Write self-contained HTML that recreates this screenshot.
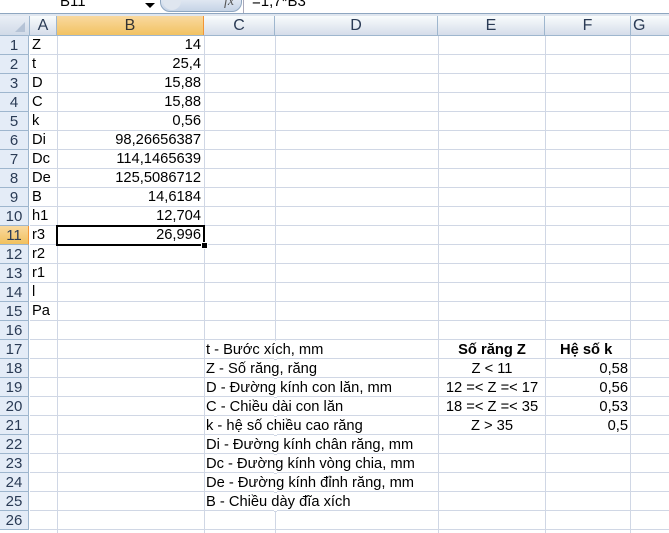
<!DOCTYPE html>
<html><head><meta charset="utf-8"><style>
body{margin:0;width:669px;height:533px;overflow:hidden;background:#fff;font-family:"Liberation Sans",Arial,sans-serif;font-size:14.7px;color:#000;position:relative}
.a{position:absolute}
.t{position:absolute;height:19px;line-height:19px;white-space:nowrap}
.r{text-align:right}
.c{text-align:center}
.vl{position:absolute;width:1px;background:#d0d7e5;top:36px;height:497px}
.ch{position:absolute;top:16px;height:20px;line-height:20px;text-align:center;font-size:16px;color:#2a3b55;background:linear-gradient(#f9fcfd,#d3dbe9);border-right:1px solid #9eb6ce;box-sizing:border-box}
.rh{position:absolute;left:0;width:29px;height:19px;line-height:19px;text-align:center;font-size:15px;color:#2a3b55;background:#e4ecf7;border-bottom:1px solid #9eb6ce;border-right:1px solid #9eb6ce;box-sizing:border-box}
</style></head><body>
<div class="a" style="left:0;top:0;width:669px;height:13px;background:#fff;border-bottom:1px solid #8ea6c0"></div>
<div class="t" style="left:60px;top:-8px;font-size:15px">B11</div>
<div class="a" style="left:145px;top:3px;width:0;height:0;border-left:5px solid transparent;border-right:5px solid transparent;border-top:5px solid #000"></div>
<div class="a" style="left:160px;top:-8px;width:82px;height:20px;border-radius:0 0 10px 10px;background:linear-gradient(#f0f4f9,#c5d3e6);border:1px solid #8ea6c0;box-sizing:border-box"></div>
<div class="a" style="left:163px;top:-8px;width:18px;height:18px;border-radius:9px;background:#dfe6ef"></div>
<div class="t" style="left:224px;top:-8px;font-style:italic;font-family:'Liberation Serif',serif;color:#555;font-size:14px">fx</div>
<div class="a" style="left:243px;top:0;width:1px;height:13px;background:#aab"></div>
<div class="t" style="left:252px;top:-8px;font-size:15px">=1,7*B3</div>
<div class="a" style="left:0;top:14px;width:669px;height:2px;background:#dfe6ef"></div>
<div class="ch" style="left:0;width:30px;background:linear-gradient(#eaeff6,#cfd9e7)"></div>
<div class="a" style="left:15px;top:22px;width:0;height:0;border-left:10px solid transparent;border-bottom:10px solid #b5c3d6"></div>
<div class="ch" style="left:30px;width:27px">A</div>
<div class="ch" style="left:57px;width:147px;background:linear-gradient(#f9d99f,#f1c15f);border-right:1px solid #f29536;color:#333">B</div>
<div class="ch" style="left:204px;width:71px">C</div>
<div class="ch" style="left:275px;width:163px">D</div>
<div class="ch" style="left:438px;width:107px">E</div>
<div class="ch" style="left:545px;width:86px">F</div>
<div class="ch" style="left:631px;width:40px;text-align:left;padding-left:2px">G</div>
<div class="a" style="left:0;top:35px;width:669px;height:1px;background:#9eb6ce"></div>
<div class="vl" style="left:57px"></div><div class="vl" style="left:204px"></div><div class="vl" style="left:275px"></div><div class="vl" style="left:438px"></div><div class="vl" style="left:545px"></div><div class="vl" style="left:630px"></div>
<div class="a" style="left:30px;top:36px;width:639px;height:497px;background:repeating-linear-gradient(to bottom,transparent 0,transparent 18px,#d0d7e5 18px,#d0d7e5 19px)"></div>
<div class="a" style="left:274px;top:341px;width:3px;height:171px;background:repeating-linear-gradient(to bottom,#fff 0,#fff 18px,#d0d7e5 18px,#d0d7e5 19px)"></div>
<div class="rh" style="top:36px">1</div><div class="rh" style="top:55px">2</div><div class="rh" style="top:74px">3</div><div class="rh" style="top:93px">4</div><div class="rh" style="top:112px">5</div><div class="rh" style="top:131px">6</div><div class="rh" style="top:150px">7</div><div class="rh" style="top:169px">8</div><div class="rh" style="top:188px">9</div><div class="rh" style="top:207px">10</div>
<div class="rh" style="top:226px;background:linear-gradient(#f9d99f,#f1c15f);border-right:1px solid #f29536">11</div>
<div class="rh" style="top:245px">12</div><div class="rh" style="top:264px">13</div><div class="rh" style="top:283px">14</div><div class="rh" style="top:302px">15</div><div class="rh" style="top:321px">16</div><div class="rh" style="top:340px">17</div><div class="rh" style="top:359px">18</div><div class="rh" style="top:378px">19</div><div class="rh" style="top:397px">20</div><div class="rh" style="top:416px">21</div><div class="rh" style="top:435px">22</div><div class="rh" style="top:454px">23</div><div class="rh" style="top:473px">24</div><div class="rh" style="top:492px">25</div><div class="rh" style="top:511px">26</div>
<div class="t" style="left:32px;top:36px">Z</div><div class="t" style="left:32px;top:55px">t</div><div class="t" style="left:32px;top:74px">D</div><div class="t" style="left:32px;top:93px">C</div><div class="t" style="left:32px;top:112px">k</div><div class="t" style="left:32px;top:131px">Di</div><div class="t" style="left:32px;top:150px">Dc</div><div class="t" style="left:32px;top:169px">De</div><div class="t" style="left:32px;top:188px">B</div><div class="t" style="left:32px;top:207px">h1</div><div class="t" style="left:32px;top:226px">r3</div><div class="t" style="left:32px;top:245px">r2</div><div class="t" style="left:32px;top:264px">r1</div><div class="t" style="left:32px;top:283px">l</div><div class="t" style="left:32px;top:302px">Pa</div>
<div class="t r" style="left:58px;width:143px;top:36px">14</div><div class="t r" style="left:58px;width:143px;top:55px">25,4</div><div class="t r" style="left:58px;width:143px;top:74px">15,88</div><div class="t r" style="left:58px;width:143px;top:93px">15,88</div><div class="t r" style="left:58px;width:143px;top:112px">0,56</div><div class="t r" style="left:58px;width:143px;top:131px">98,26656387</div><div class="t r" style="left:58px;width:143px;top:150px">114,1465639</div><div class="t r" style="left:58px;width:143px;top:169px">125,5086712</div><div class="t r" style="left:58px;width:143px;top:188px">14,6184</div><div class="t r" style="left:58px;width:143px;top:207px">12,704</div>
<div class="a" style="left:56px;top:225px;width:149px;height:21px;border:2px solid #000;box-sizing:border-box"></div>
<div class="a" style="left:201px;top:242px;width:5px;height:5px;background:#000;border:1px solid #fff"></div>
<div class="t r" style="left:58px;width:143px;top:226px">26,996</div>
<div class="t" style="left:206px;top:341px">t - Bước xích, mm</div>
<div class="t" style="left:206px;top:360px">Z - Số răng, răng</div>
<div class="t" style="left:206px;top:379px">D - Đường kính con lăn, mm</div>
<div class="t" style="left:206px;top:398px">C - Chiều dài con lăn</div>
<div class="t" style="left:206px;top:417px">k - hệ số chiều cao răng</div>
<div class="t" style="left:206px;top:436px">Di - Đường kính chân răng, mm</div>
<div class="t" style="left:206px;top:455px">Dc - Đường kính vòng chia, mm</div>
<div class="t" style="left:206px;top:474px">De - Đường kính đỉnh răng, mm</div>
<div class="t" style="left:206px;top:493px">B - Chiều dày đĩa xích</div>
<div class="t c" style="left:439px;width:106px;top:341px;font-weight:bold">Số răng Z</div>
<div class="t" style="left:560px;top:341px;font-weight:bold">Hệ số k</div>
<div class="t c" style="left:439px;width:106px;top:360px">Z &lt; 11</div>
<div class="t c" style="left:439px;width:106px;top:379px">12 =&lt; Z =&lt; 17</div>
<div class="t c" style="left:439px;width:106px;top:398px">18 =&lt; Z =&lt; 35</div>
<div class="t c" style="left:439px;width:106px;top:417px">Z &gt; 35</div>
<div class="t r" style="left:546px;width:82px;top:360px">0,58</div>
<div class="t r" style="left:546px;width:82px;top:379px">0,56</div>
<div class="t r" style="left:546px;width:82px;top:398px">0,53</div>
<div class="t r" style="left:546px;width:82px;top:417px">0,5</div>
</body></html>
